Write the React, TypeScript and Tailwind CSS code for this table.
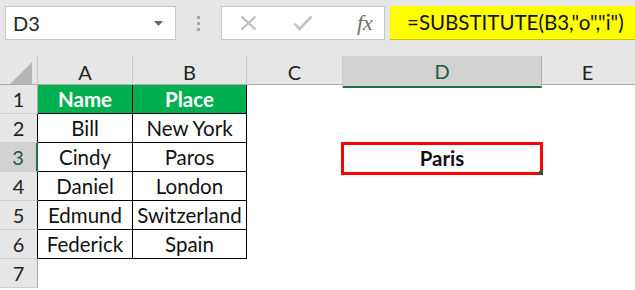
import React from 'react';

const font = { fontFamily: 'Lato, "Open Sans", sans-serif' };

const rows: [string, string][] = [
  ['Bill', 'New York'],
  ['Cindy', 'Paros'],
  ['Daniel', 'London'],
  ['Edmund', 'Switzerland'],
  ['Federick', 'Spain'],
];

const grid = 'grid grid-cols-[38px_95px_114px_96px_199px_1fr]';

function RowHead({ n, sel, edge }: { n: number; sel?: boolean; edge: string }) {
  return (
    <div
      className={`h-[29px] flex items-center justify-center text-[20px] border-b border-b-[#cfcfcf] ${
        sel ? 'bg-[#d2d2d2] text-[#215a3f] border-r-2 border-r-[#217346]' : `bg-[#e6e6e6] text-[#222] border-r ${edge}`
      }`}
    >
      {n}
    </div>
  );
}

function Cell({ children, cls = '' }: { children?: React.ReactNode; cls?: string }) {
  return (
    <div className={`h-[29px] flex items-center justify-center text-[20.5px] text-[#111] ${cls}`}>{children}</div>
  );
}

export default function App() {
  return (
    <div className="w-[635px] h-[290px] overflow-hidden bg-white" style={font}>
      {/* toolbar */}
      <div className="h-[56px] bg-[#e6e6e6] flex items-start pt-[6px] pl-[5px]">
        <div className="shrink-0 w-[171px] h-[34px] bg-white border border-[#c6c6c6] flex items-center justify-between pl-[7px] pr-[12px]">
          <span className="text-[20px] text-[#222]">D3</span>
          <svg width="9" height="5" viewBox="0 0 9 5">
            <path d="M0 0h9L4.5 5z" fill="#666" />
          </svg>
        </div>
        <div className="shrink-0 w-[45px] h-[34px] flex flex-col items-center justify-center gap-[3px]">
          <div className="w-[3px] h-[3px] bg-[#a6a6a6]" />
          <div className="w-[3px] h-[3px] bg-[#a6a6a6]" />
          <div className="w-[3px] h-[3px] bg-[#a6a6a6]" />
        </div>
        <div className="shrink-0 w-[164px] h-[34px] bg-white border border-[#c6c6c6] flex items-center pl-[18px]">
          <svg width="17" height="16" viewBox="0 0 17 16">
            <path d="M1.5 1.5l14 13M15.5 1.5l-14 13" stroke="#bdbdbd" strokeWidth="2.2" fill="none" />
          </svg>
          <svg width="20" height="16" viewBox="0 0 20 16" className="ml-[36px]">
            <path d="M1.5 8.5l5 5.5L18.5 1.5" stroke="#c4c4c4" strokeWidth="2.6" fill="none" />
          </svg>
          <span
            className="ml-[44px] text-[22px] italic text-[#6e6e6e] leading-none"
            style={{ fontFamily: '"Liberation Serif", serif' }}
          >
            fx
          </span>
        </div>
        <div className="ml-[5px] flex-1 min-w-0 h-[34px] bg-[#ffff00] border-b border-b-[#c9c400] flex items-center pl-[17px]">
          <span className="text-[20.5px] text-[#111] whitespace-nowrap">=SUBSTITUTE(B3,"o","i")</span>
        </div>
      </div>

      {/* column headers */}
      <div className={`${grid} h-[29px] bg-[#e6e6e6] border-b border-b-[#ababab]`}>
        <div className="border-r border-r-[#c8c8c8] flex items-end justify-end pr-[5px] pb-[4px]">
          <svg width="22" height="22" viewBox="0 0 22 22">
            <path d="M22 0V22H0z" fill="#b5b5b5" />
          </svg>
        </div>
        {['A', 'B', 'C'].map((c) => (
          <div key={c} className="border-r border-r-[#c8c8c8] flex items-center justify-center text-[20px] text-[#222]">
            {c}
          </div>
        ))}
        <div className="bg-[#d2d2d2] border-b-2 border-b-[#217346] border-r border-r-[#ababab] flex items-center justify-center text-[20px] text-[#215a3f]">
          D
        </div>
        <div className="flex items-center justify-center text-[20px] text-[#222] pr-[2px]">E</div>
      </div>

      {/* row 1 */}
      <div className={grid}>
        <RowHead n={1} edge="border-r-[#ababab]" />
        <Cell cls="bg-[#00b050] font-bold border-r border-r-black border-b border-b-black !text-white">Name</Cell>
        <Cell cls="bg-[#00b050] font-bold border-r border-r-black border-b border-b-black !text-white">Place</Cell>
        <Cell />
        <Cell />
        <Cell />
      </div>

      {rows.map(([name, place], i) => {
        const n = i + 2;
        const sel = n === 3;
        return (
          <div key={n} className={grid}>
            <RowHead n={n} sel={sel} edge="border-r-black" />
            <Cell cls="border-r border-r-black border-b border-b-black">{name}</Cell>
            <Cell cls="border-r border-r-black border-b border-b-black">{place}</Cell>
            <Cell />
            {sel ? (
              <div className="relative h-[29px]">
                <div className="absolute -left-[2px] -top-[1px] w-[202px] h-[33px] border-[3px] border-[#ff0000] flex items-center justify-center">
                  <span className="text-[20.5px] font-bold text-[#111]">Paris</span>
                  <div className="absolute -right-[3px] -bottom-[3px] w-[4px] h-[4px] bg-[#1e5b2e]" />
                </div>
              </div>
            ) : (
              <Cell />
            )}
            <Cell />
          </div>
        );
      })}

      {/* row 7 */}
      <div className={grid}>
        <RowHead n={7} edge="border-r-[#ababab]" />
        <Cell />
        <Cell />
        <Cell />
        <Cell />
        <Cell />
      </div>
    </div>
  );
}
